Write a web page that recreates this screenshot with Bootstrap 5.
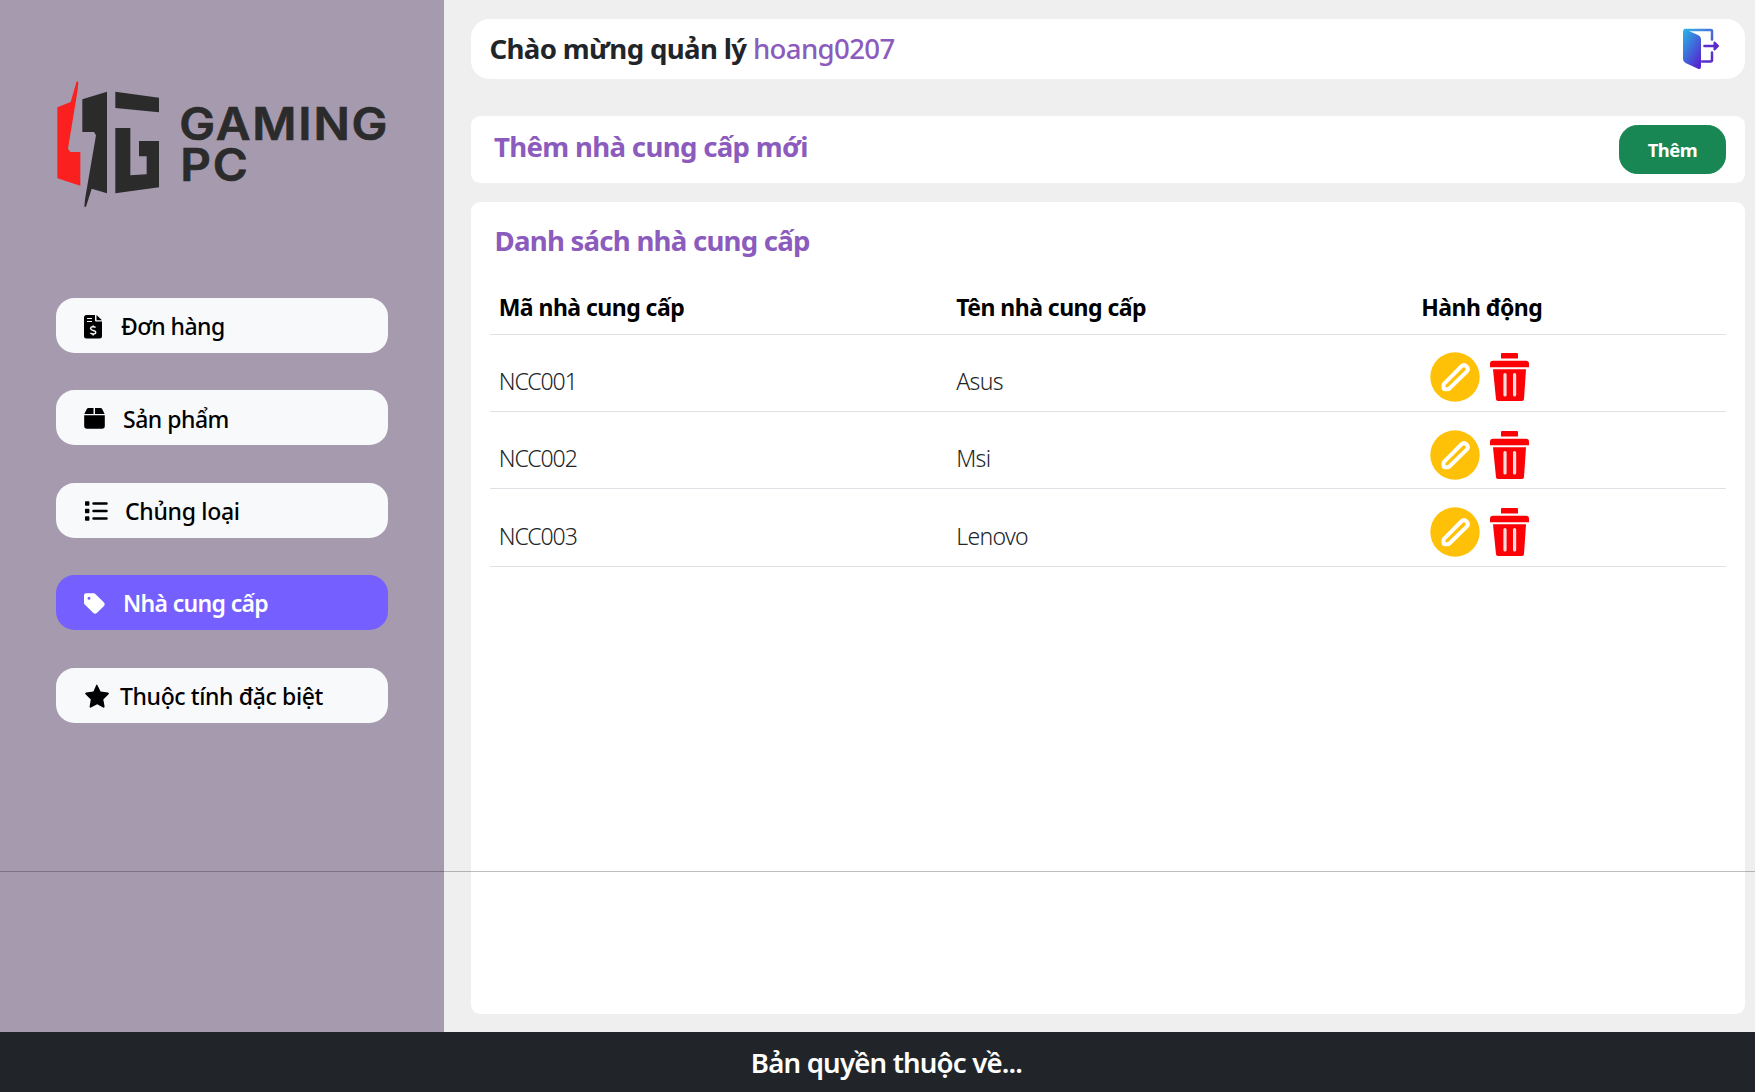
<!DOCTYPE html>
<html lang="vi">
<head>
<meta charset="utf-8">
<meta name="viewport" content="width=device-width, initial-scale=1">
<title>Gaming PC - Nhà cung cấp</title>
<link rel="stylesheet" href="https://cdn.jsdelivr.net/npm/bootstrap@5.3.0/dist/css/bootstrap.min.css">
<style>
  body { font-family: "Noto Sans", "Open Sans", sans-serif; font-size: 23px; background: #efefef; height: 1092px; overflow: hidden; }
  .side-panel { width: 443.5px; background: #a69aae; padding: 80px 56px 0 56px; }
  .logo-art { display: block; width: 332px; height: 128px; margin-bottom: 90px; }
  .menu-link { height: 55px; margin-bottom: 37.4px; border-radius: 18.4px; background: #f8f9fb; color: #000; font-weight: 500; text-decoration: none; padding: 2px 0 0 28px; line-height: 34.5px; }
  .menu-link.active { background: #7560ff; color: #fff; font-weight: 600; letter-spacing: -.66px; }
  .menu-link svg { flex: none; }
  .work-area { padding: 18.5px 10px 18px 27.5px; }
  .panel { background: #fff; border-radius: 9.2px; }
  .welcome { height: 60.5px; border-radius: 18.4px; margin-bottom: 37px; padding: 0 25px 0 18.5px; font-size: 27.6px; letter-spacing: -.65px; }
  .violet { color: #8b5bbd; }
  .panel-title { font-size: 27.6px; line-height: 33px; font-weight: 700; letter-spacing: -.68px; margin: 0; }
  .add-bar { height: 67px; margin-bottom: 18.5px; padding: 9px 19px 9px 23px; }
  .add-bar .panel-title { padding-top: 5px; }
  .btn-add { width: 107px; height: 48.5px; border-radius: 18.4px; font-size: 18.4px; font-weight: 700; letter-spacing: -.5px; padding: 2px 0 0; }
  .list-panel { padding: 22.5px 19px 0 18.5px; }
  .list-panel .panel-title { padding-left: 5px; margin-bottom: 23px; letter-spacing: -.76px; }
  .supplier-table { table-layout: fixed; line-height: 34.5px; --bs-table-bg: transparent; }
  .supplier-table > :not(caption) > * > * { padding: 0 9.2px; border-bottom: 1px solid #dee2e6; }
  .supplier-table th { height: 54px; padding-top: 10px !important; vertical-align: top; color: #000; font-weight: 700; letter-spacing: -.54px; }
  .supplier-table td { height: 77.4px; font-weight: 300; letter-spacing: -.65px; padding-top: 17px !important; color: #212529; vertical-align: middle; }
  .supplier-table td.code { letter-spacing: -1.05px; }
  .supplier-table td.tools { padding: 9px 0 0 18px !important; line-height: 0; }
  .supplier-table td.tools svg + svg { margin-left: 9.5px; }
  .rule { top: 871px; left: 0; height: 1.2px; background: #000; opacity: .25; }
  .site-footer { height: 60px; font-size: 27.6px; font-weight: 600; letter-spacing: -.82px; padding: 2px 0 0 18px; }
</style>
</head>
<body class="d-flex flex-column position-relative">
<svg width="0" height="0" class="position-absolute">
  <defs>
    <symbol id="edit" viewBox="0 0 50 50">
      <circle cx="25" cy="25" r="24.7" fill="#ffc107"/>
      <path d="M14 31.8 31.3 14.500Q34 11.900 36.500 14.400 39.200 17 36.700 19.600L19.400 36.500Q18.600 37.200 17.600 37.200H15.300Q13.500 37.200 13.500 35.400V33.200Q13.500 32.300 14 31.800Z" fill="none" stroke="#fff" stroke-width="3.900" stroke-linejoin="round"/>
    </symbol>
    <symbol id="trash" viewBox="0 0 39 48">
      <g fill="#fb0207"><path d="M12 0h15a1 1 0 0 1 1 1v4.500H11V1a1 1 0 0 1 1-1z"/><path d="M3 7.700h33a3 3 0 0 1 3 3v3.500H0v-3.500a3 3 0 0 1 3-3z"/><path d="M3 16.300h33l-2 30a2 2 0 0 1-2 1.700H8a2 2 0 0 1-2-1.700z"/></g>
      <path d="M15 21.500v20.500M24.600 21.500v20.500" stroke="#ffdcdc" stroke-width="3.200" stroke-linecap="round"/>
    </symbol>
    <linearGradient id="door" x1="0" y1="0" x2=".75" y2="1"><stop offset="0" stop-color="#27b8e4"/><stop offset="1" stop-color="#5526d0"/></linearGradient>
    <linearGradient id="frame" gradientUnits="userSpaceOnUse" x1="4" y1="0" x2="30" y2="30"><stop offset="0" stop-color="#35b4e6"/><stop offset="1" stop-color="#5b2bcb"/></linearGradient>
  </defs>
</svg>

<div class="d-flex flex-grow-1">
  <aside class="side-panel flex-shrink-0">
    <svg class="logo-art" viewBox="48 60 996 384">
      <path fill="#fb2020" d="M110 64 115 66 113 90 84 266 91 276H121V377L52 355V142L92 126Z"/>
      <path fill="#2b2b2b" d="M127 118 201 95V400L155 386 138 440H133L135 418 168 226 162 216H127ZM226 95 357 113V157L226 144ZM226 204H271V346L320 343V289H297V243H357V382L226 400Z"/>
      <g fill="#2b2b2b" font-family="Inter, sans-serif" font-weight="600" font-size="135" stroke="#2b2b2b" stroke-width="2">
        <text x="418" y="239" letter-spacing="5" textLength="630" lengthAdjust="spacingAndGlyphs">GAMING</text>
        <text x="421" y="363" letter-spacing="5" textLength="208" lengthAdjust="spacingAndGlyphs">PC</text>
      </g>
    </svg>
    <nav>
      <a href="#" class="menu-link d-flex align-items-center"><svg width="37" height="24" viewBox="0 0 37 24"><path d="M2.500 0H11v5.500a1 1 0 0 0 1 1h6V21a2.500 2.500 0 0 1-2.500 2.500h-13A2.500 2.500 0 0 1 0 21V2.500A2.500 2.500 0 0 1 2.500 0zM12.500 0 18 5.200h-5.500z"/><path d="M3 3.500h5M3 6.500h5" stroke="#f8f9fb" stroke-width="1.200"/><path d="M11.600 12.300C10 11.400 6.600 11.400 6.600 13.500 6.600 16 11.800 14.800 11.800 17.300 11.800 19.500 8.200 19.300 6.400 18.200M9.200 10.500V12M9.200 19V20.600" fill="none" stroke="#f8f9fb" stroke-width="1.500"/></svg><span style="letter-spacing:-.55px">Đơn hàng</span></a>
      <a href="#" class="menu-link d-flex align-items-center"><svg width="39" height="21" viewBox="0 0 39 21"><path d="M4.500 0H9.500V6H.3L2.700 1.200Q3.300 0 4.500 0zM11 0h5.500q1.200 0 1.800 1.200L20.600 6H11zM.2 7.300h20.600V18a2.800 2.800 0 0 1-2.800 2.800H3A2.800 2.800 0 0 1 .2 18z"/></svg><span style="letter-spacing:-.5px">Sản phẩm</span></a>
      <a href="#" class="menu-link d-flex align-items-center"><svg width="41" height="20" viewBox="0 0 41 20"><path d="M9.500 2.500H22.500M9.500 10H22.500M9.500 17.500H22.500" stroke="#000" stroke-width="2.500" stroke-linecap="round"/><path d="M1.800.3h2.800a.8.800 0 0 1 .8.800v2.800a.8.800 0 0 1-.8.800H1.800a.8.800 0 0 1-.8-.8V1.100a.8.800 0 0 1 .8-.8zM1.800 7.800h2.800a.8.800 0 0 1 .8.800v2.800a.8.800 0 0 1-.8.800H1.800a.8.800 0 0 1-.8-.8V8.600a.8.800 0 0 1 .8-.8zM1.800 15.300h2.800a.8.800 0 0 1 .8.800v2.800a.8.800 0 0 1-.8.800H1.800a.8.800 0 0 1-.8-.8v-2.800a.8.800 0 0 1 .8-.8z"/></svg><span style="letter-spacing:-.3px">Chủng loại</span></a>
      <a href="#" class="menu-link active d-flex align-items-center"><svg width="39" height="24" viewBox="0 -1 39 24"><path fill="#fff" fill-rule="evenodd" d="M0 2.200V9.700q0 1 .7 1.700l8.700 8.600q1.700 1.600 3.400 0l7.200-7q1.600-1.700 0-3.400L11.300.9Q10.600.2 9.600.2H2Q0 .2 0 2.200zM5 3.800a1.500 1.500 0 1 1 0 3 1.500 1.500 0 0 1 0-3z"/></svg><span>Nhà cung cấp</span></a>
      <a href="#" class="menu-link d-flex align-items-center"><svg width="36" height="24" viewBox="0 0 36 24"><path d="M13.200.7 16.600 7.400 24 8.500Q25.700 9 24.600 10.300L19.300 15.400 20.600 22.500Q20.600 24 19.100 23.500L13.200 20.200 7 23.500Q5.500 24 5.600 22.500L6.800 15.400 1.500 10.300Q.5 8.900 2.100 8.500L9.400 7.400 12.400.7Q12.800.2 13.200.7z"/></svg><span style="letter-spacing:-.38px">Thuộc tính đặc biệt</span></a>
    </nav>
  </aside>

  <main class="work-area flex-grow-1 d-flex flex-column">
    <header class="panel welcome d-flex align-items-center justify-content-between">
      <div><b>Chào mừng quản lý</b> <span class="violet fw-medium">hoang0207</span></div>
      <a href="#" class="d-flex"><svg width="38" height="42" viewBox="0 0 38 42">
        <g fill="none" stroke="url(#frame)" stroke-width="2.500" stroke-linejoin="round" stroke-linecap="round"><path d="M3 2H29Q30 2 30 3V11.500M30 24.500V32Q30 33.500 28.500 33.500H20"/></g>
        <path d="M1 3.500Q1 1.200 3.500 1.500L16 7Q19 8.300 19 11V38.500Q19 42 16 40.700L3.500 35Q1 33.800 1 31z" fill="url(#door)"/>
        <path d="M22.500 18H35" fill="none" stroke="#5b2bcb" stroke-width="2.600" stroke-linecap="round"/>
        <path d="M32.500 14.500 36 18 32.500 21.500z" fill="#5b2bcb" stroke="#5b2bcb" stroke-width="2" stroke-linejoin="round"/>
      </svg></a>
    </header>

    <section class="panel add-bar d-flex justify-content-between">
      <h2 class="panel-title violet">Thêm nhà cung cấp mới</h2>
      <button type="button" class="btn btn-success btn-add">Thêm</button>
    </section>

    <section class="panel list-panel flex-grow-1">
      <h2 class="panel-title violet">Danh sách nhà cung cấp</h2>
      <table class="table supplier-table mb-0">
        <colgroup><col style="width:457.500px"><col style="width:465px"><col></colgroup>
        <thead><tr><th>Mã nhà cung cấp</th><th>Tên nhà cung cấp</th><th>Hành động</th></tr></thead>
        <tbody>
          <tr><td class="code">NCC001</td><td>Asus</td><td class="tools"><svg width="50" height="50"><use href="#edit"/></svg><svg width="39" height="48"><use href="#trash"/></svg></td></tr>
          <tr><td class="code">NCC002</td><td>Msi</td><td class="tools"><svg width="50" height="50"><use href="#edit"/></svg><svg width="39" height="48"><use href="#trash"/></svg></td></tr>
          <tr><td class="code">NCC003</td><td>Lenovo</td><td class="tools"><svg width="50" height="50"><use href="#edit"/></svg><svg width="39" height="48"><use href="#trash"/></svg></td></tr>
        </tbody>
      </table>
    </section>
  </main>
</div>
<div class="rule position-absolute w-100"></div>
<footer class="site-footer text-bg-dark d-flex align-items-center justify-content-center">Bản quyền thuộc về...</footer>
<script src="https://cdn.jsdelivr.net/npm/bootstrap@5.3.0/dist/js/bootstrap.bundle.min.js"></script>
</body>
</html>
